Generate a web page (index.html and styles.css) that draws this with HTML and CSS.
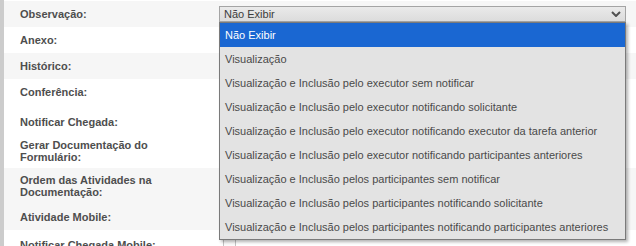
FILE: index.html
```html
<!DOCTYPE html>
<html lang="pt-BR">
<head>
  <meta charset="UTF-8" />
  <title>Configuração da Atividade</title>
  <link rel="stylesheet" href="styles.css" />
</head>
<body>

<div class="form">
  <!-- Observação row with the open dropdown -->
  <div class="row alt r-short">
    <span class="label">Observação:</span>
    <div class="field">
      <div class="select-wrap">
        <div class="select">
          <span>Não Exibir</span>
          <svg class="chevron" width="10" height="6" viewBox="0 0 10 6">
            <polyline points="1,1 5,5 9,1" fill="none" stroke="#505050" stroke-width="2" />
          </svg>
        </div>
        <ul class="options">
          <li class="selected">Não Exibir</li>
          <li>Visualização</li>
          <li>Visualização e Inclusão pelo executor sem notificar</li>
          <li>Visualização e Inclusão pelo executor notificando solicitante</li>
          <li>Visualização e Inclusão pelo executor notificando executor da tarefa anterior</li>
          <li>Visualização e Inclusão pelo executor notificando participantes anteriores</li>
          <li>Visualização e Inclusão pelos participantes sem notificar</li>
          <li>Visualização e Inclusão pelos participantes notificando solicitante</li>
          <li>Visualização e Inclusão pelos participantes notificando participantes anteriores</li>
        </ul>
      </div>
    </div>
  </div>

  <div class="row r-short">
    <span class="label">Anexo:</span>
    <div class="field"></div>
  </div>

  <div class="row alt r-short">
    <span class="label">Histórico:</span>
    <div class="field"></div>
  </div>

  <div class="row r-short">
    <span class="label">Conferência:</span>
    <div class="field"></div>
  </div>

  <div class="row r-notify">
    <span class="label">Notificar Chegada:</span>
    <div class="field"></div>
  </div>

  <div class="row r-doc">
    <span class="label">Gerar Documentação do Formulário:</span>
    <div class="field"></div>
  </div>

  <div class="row alt r-order">
    <span class="label">Ordem das Atividades na Documentação:</span>
    <div class="field"></div>
  </div>

  <div class="row alt r-mobile">
    <span class="label">Atividade Mobile:</span>
    <div class="field"></div>
  </div>

  <div class="row r-last">
    <span class="label">Notificar Chegada Mobile:</span>
    <div class="field">
      <span class="box"></span>
    </div>
  </div>
</div>

</body>
</html>
```

FILE: styles.css
```css
* {
  margin: 0;
  padding: 0;
  box-sizing: border-box;
}

body {
  background: #ffffff;
  font-family: "Liberation Sans", Arial, sans-serif;
  font-size: 11px;
  color: #444444;
  overflow: hidden;
}

/* form table */
.form {
  border-left: 4px solid #cccccc;
  padding-top: 1px;
}

.row {
  display: flex;
  align-items: center;
  background: #ffffff;
}

.row.alt {
  background: #f6f6f6;
}

.label {
  width: 215px;
  flex-shrink: 0;
  padding: 0 48px 0 16px;
  font-weight: bold;
  line-height: 12px;
  color: #4e4e4e;
}

.field {
  flex: 1;
  align-self: stretch;
  display: flex;
}

/* row heights */
.r-short { height: 26px; }
.r-notify { height: 34px; }
.r-doc { height: 29px; padding-bottom: 5px; }
.r-order { height: 35px; }
.r-mobile { height: 27px; }
.r-last { height: 30px; padding-top: 4px; align-items: flex-start; }
.r-last .label { padding-top: 5px; }

/* select with open list */
.select-wrap {
  position: relative;
  width: 407px;
  margin-top: 5px;
}

.select {
  height: 16px;
  display: flex;
  align-items: center;
  justify-content: space-between;
  padding: 0 4px 0 4px;
  border: 1px solid #a4a4a4;
  background: linear-gradient(#eaeaea, #dcdcdc);
  color: #3c3c3c;
}

.options {
  position: absolute;
  top: 16px;
  left: 0;
  width: 407px;
  list-style: none;
  background: #e3e3e3;
  border: 1px solid #7a7a7a;
  box-shadow: 2px 2px 3px rgba(0, 0, 0, 0.3);
  z-index: 10;
}

.options li {
  height: 24px;
  line-height: 24px;
  padding-left: 5px;
  color: #4a4a4a;
  white-space: nowrap;
}

.options li.selected {
  background: #1a67d2;
  color: #ffffff;
}

.box {
  width: 13px;
  height: 14px;
  margin: 4px 0 0 4px;
  border: 1px solid #c4c4c4;
  background: #fbfbfb;
}
```
